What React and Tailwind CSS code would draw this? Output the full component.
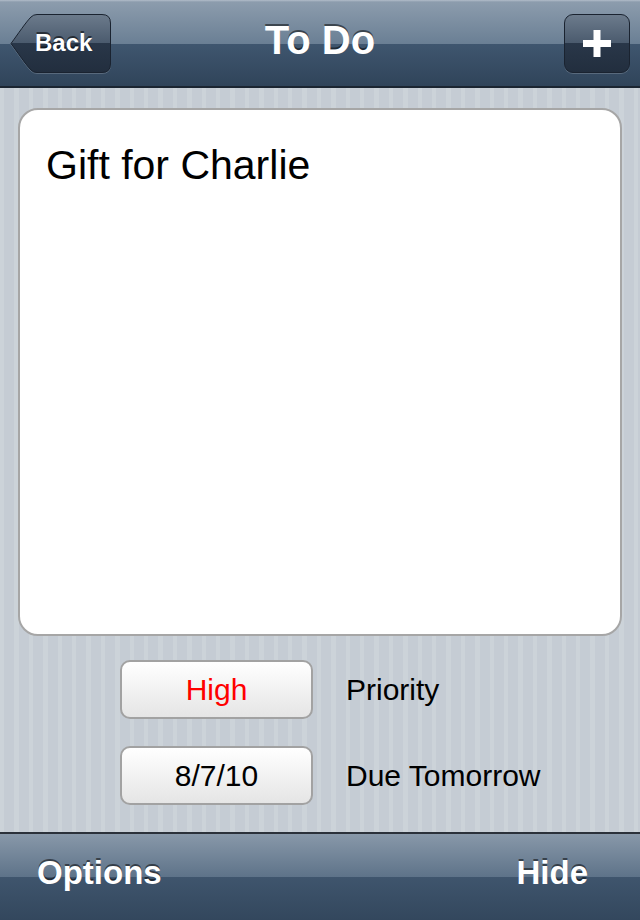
import React from "react";

function BackButton() {
  return (
    <div className="relative w-[101px] h-[59px]">
      <svg width="101" height="60" viewBox="0 0 101 60" className="block">
        <defs>
          <linearGradient id="bkg" x1="0" y1="0" x2="0" y2="1">
            <stop offset="0" stopColor="#6c7b8c" />
            <stop offset="0.5" stopColor="#4a5a6d" />
            <stop offset="0.5" stopColor="#293749" />
            <stop offset="1" stopColor="#222e3e" />
          </linearGradient>
        </defs>
        <path
          d="M1 30.5 C 8 21, 16 9, 21 4 Q 23.5 1.5 27 1.5 L 92 1.5 Q 100.5 1.5 100.5 10 L 100.5 51 Q 100.5 59.5 92 59.5 L 27 59.5 Q 23.5 59.5 21 57 C 16 52, 8 40, 1 30.5 Z"
          fill="none"
          stroke="rgba(255,255,255,0.18)"
          strokeWidth="1"
        />
        <path
          d="M1 29.5 C 8 20, 16 8, 21 3 Q 23.5 0.5 27 0.5 L 92 0.5 Q 100.5 0.5 100.5 9 L 100.5 50 Q 100.5 58.5 92 58.5 L 27 58.5 Q 23.5 58.5 21 56 C 16 51, 8 39, 1 29.5 Z"
          fill="url(#bkg)"
          stroke="#1a2330"
          strokeWidth="1"
        />
      </svg>
      <span className="absolute left-[25px] top-[14px] text-[24px] leading-[30px] font-bold text-white [text-shadow:0_-2px_0_rgba(0,0,0,0.55)]">
        Back
      </span>
    </div>
  );
}

function PlusButton() {
  return (
    <div className="w-[66px] h-[59px] rounded-[9px] border border-[#1a2330] bg-[linear-gradient(to_bottom,#6c7b8c_0%,#4a5a6d_50%,#293749_50%,#222e3e_100%)] shadow-[0_1px_0_rgba(255,255,255,0.18)] flex items-center justify-center">
      <svg width="28" height="28" viewBox="0 0 28 28" className="block">
        <rect x="10.5" y="0" width="7" height="27" fill="#ffffff" />
        <rect x="0" y="10" width="28" height="7" fill="#ffffff" />
      </svg>
    </div>
  );
}

function PillButton({ children, red }) {
  return (
    <div
      className={
        "w-[193px] h-[59px] rounded-[10px] border-2 border-[#a2a2a2] bg-[linear-gradient(to_bottom,#ffffff,#e5e5e5)] flex items-center justify-center text-[30px] " +
        (red ? "text-[#ff0000]" : "text-black")
      }
    >
      {children}
    </div>
  );
}

export default function App() {
  return (
    <div className="w-[640px] h-[920px] flex flex-col font-['Liberation_Sans',Arial,sans-serif] overflow-hidden">
      {/* Nav bar */}
      <div className="h-[88px] shrink-0 grid grid-cols-[1fr_auto_1fr] items-start px-[10px] pt-[14px] bg-[linear-gradient(to_bottom,#b2bdca_0px,#8c9cad_2px,#6a7f94_44px,#3f566f_44px,#30445a_86px,#1b2531_86px,#1b2531_88px)]">
        <div className="justify-self-start">
          <BackButton />
        </div>
        <div className="text-white font-bold text-[40px] leading-[48px] mt-[2px] [text-shadow:0_-2px_0_rgba(0,0,0,0.5)]">
          To Do
        </div>
        <div className="justify-self-end">
          <PlusButton />
        </div>
      </div>

      {/* Content */}
      <div className="flex-1 flex flex-col px-[18px] pt-[20px] bg-[repeating-linear-gradient(90deg,#ccd3d9_0px,#ccd3d9_4.5px,#c5ccd4_4.5px,#c5ccd4_14.4px)]">
        <div className="h-[528px] rounded-[20px] border-2 border-[#a6a6a6] bg-white pl-[26px] pt-[31px]">
          <div className="text-[41px] leading-[48px] text-black">Gift for Charlie</div>
        </div>

        <div className="flex flex-col pl-[102px] pt-[24px] gap-[27px]">
          <div className="flex items-center gap-[33px]">
            <PillButton red>High</PillButton>
            <span className="text-[30px] text-black">Priority</span>
          </div>
          <div className="flex items-center gap-[33px]">
            <PillButton>8/7/10</PillButton>
            <span className="text-[30px] text-black">Due Tomorrow</span>
          </div>
        </div>
      </div>

      {/* Toolbar */}
      <div className="h-[88px] shrink-0 flex items-start justify-between pl-[37px] pr-[52px] pt-[21px] bg-[linear-gradient(to_bottom,#2b313a_0px,#2b313a_2px,#8898a9_2px,#5e7389_45px,#3f556d_45px,#33475d_88px)]">
        <span className="text-white font-bold text-[33px] leading-[40px] [text-shadow:0_-2px_0_rgba(0,0,0,0.5)]">
          Options
        </span>
        <span className="text-white font-bold text-[33px] leading-[40px] [text-shadow:0_-2px_0_rgba(0,0,0,0.5)]">
          Hide
        </span>
      </div>
    </div>
  );
}
